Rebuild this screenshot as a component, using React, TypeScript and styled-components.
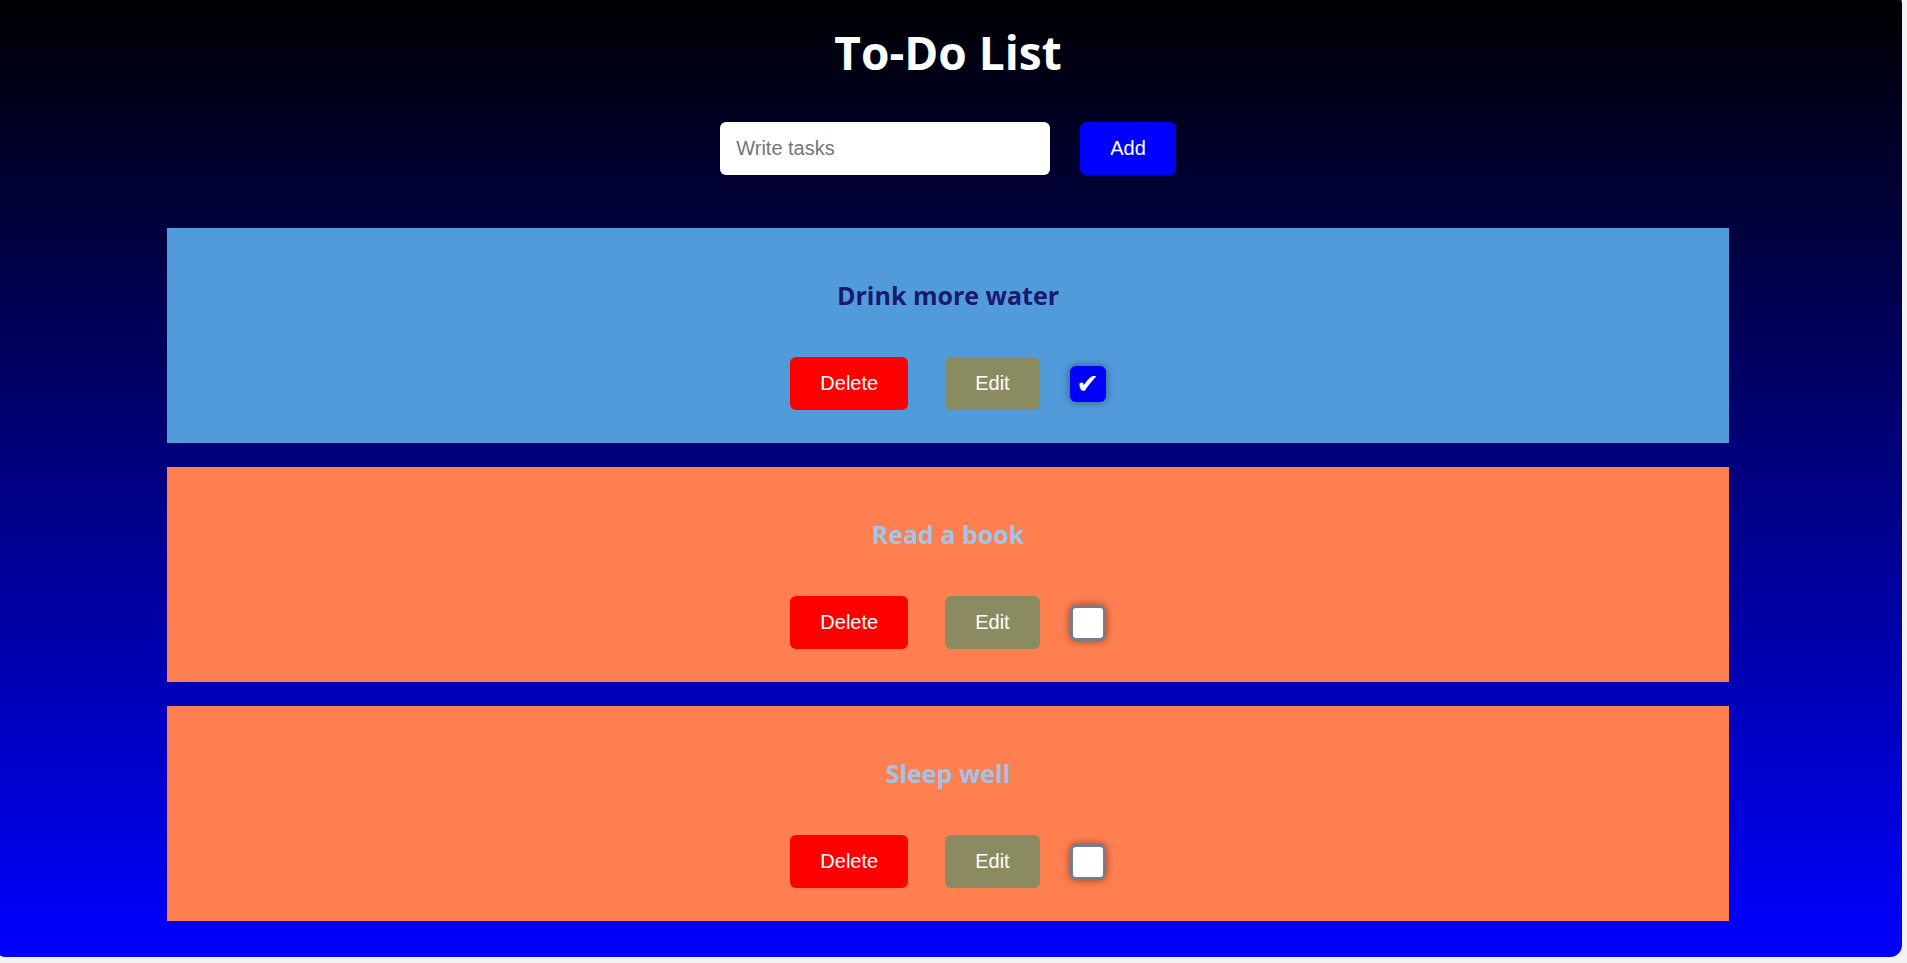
import React, { useState } from 'react';
import styled, { createGlobalStyle } from 'styled-components';

interface Task {
  id: number;
  text: string;
  done: boolean;
}

const initialTasks: Task[] = [
  { id: 1, text: 'Drink more water', done: true },
  { id: 2, text: 'Read a book', done: false },
  { id: 3, text: 'Sleep well', done: false },
];

const App = () => {
  const [tasks, setTasks] = useState<Task[]>(initialTasks);
  const [value, setValue] = useState('');

  const addTask = () => {
    if (!value.trim()) return;
    setTasks([...tasks, { id: Date.now(), text: value, done: false }]);
    setValue('');
  };
  const toggleTask = (id: number) =>
    setTasks(tasks.map((t) => (t.id === id ? { ...t, done: !t.done } : t)));
  const deleteTask = (id: number) => setTasks(tasks.filter((t) => t.id !== id));

  return (
    <>
      <GlobalStyle />
      <StWrapper>
        <StTitle>To-Do List</StTitle>
        <StForm onSubmit={(e) => { e.preventDefault(); addTask(); }}>
          <StInput placeholder="Write tasks" value={value} onChange={(e) => setValue(e.target.value)} />
          <StAddBtn type="submit">Add</StAddBtn>
        </StForm>
        <StList>
          {tasks.map((task) => (
            <StCard key={task.id} $done={task.done}>
              <StTaskText $done={task.done}>{task.text}</StTaskText>
              <StActions>
                <StDeleteBtn onClick={() => deleteTask(task.id)}>Delete</StDeleteBtn>
                <StEditBtn>Edit</StEditBtn>
                <StCheck type="checkbox" checked={task.done} onChange={() => toggleTask(task.id)} />
              </StActions>
            </StCard>
          ))}
        </StList>
      </StWrapper>
    </>
  );
};

export default App;

const GlobalStyle = createGlobalStyle`
  html, body {
    margin: 0;
    padding: 0;
    background-color: #f3f3f3;
    overflow: hidden;
  }
  * {
    box-sizing: border-box;
  }
`;

const StWrapper = styled.main`
  display: flex;
  flex-direction: column;
  align-items: center;

  margin: -8px 5px 0 -6px;
  padding: 30px 0 36px;
  border-radius: 12px;

  background: linear-gradient(to bottom, #000000, #0000ff);
`;

const StTitle = styled.h1`
  margin: 0;

  font-family: 'Segoe UI', 'Open Sans', sans-serif;
  font-weight: 700;
  font-size: 46px;
  line-height: 60px;

  color: #ffffff;
`;

const StForm = styled.form`
  display: flex;
  gap: 30px;

  margin-top: 40px;
`;

const StInput = styled.input`
  width: 330px;
  height: 53px;
  padding: 0 16px;
  border: none;
  border-radius: 6px;

  font-family: 'Liberation Sans', Arial, sans-serif;
  font-size: 20px;
  outline: none;

  &::placeholder {
    color: #757575;
  }
`;

const Button = styled.button`
  height: 53px;
  padding: 0 30px;
  border: none;
  border-radius: 6px;

  font-family: 'Liberation Sans', Arial, sans-serif;
  font-size: 20px;
  color: #ffffff;
  cursor: pointer;
`;

const StAddBtn = styled(Button)`
  background-color: #0000ff;
`;

const StList = styled.section`
  display: flex;
  flex-direction: column;
  gap: 24px;

  width: 1562px;
  margin-top: 53px;
`;

const StCard = styled.article<{ $done: boolean }>`
  display: flex;
  flex-direction: column;
  align-items: center;

  height: 215px;
  padding-top: 51px;

  background-color: ${({ $done }) => ($done ? '#529bdb' : '#ff7f50')};
`;

const StTaskText = styled.h2<{ $done: boolean }>`
  margin: 0;

  font-family: 'Segoe UI', 'Open Sans', sans-serif;
  font-weight: 700;
  font-size: 25px;
  line-height: 32px;

  color: ${({ $done }) => ($done ? '#191970' : '#9fc5e8')};
`;

const StActions = styled.div`
  display: flex;
  align-items: center;
  gap: 30px;

  margin-top: 46px;
`;

const StDeleteBtn = styled(Button)`
  margin-right: 7px;
  background-color: #ff0000;
`;

const StEditBtn = styled(Button)`
  background-color: #8b8b62;
`;

const StCheck = styled.input`
  appearance: none;
  display: grid;
  place-items: center;

  width: 36px;
  height: 36px;
  margin: 0;
  border: 3px solid #777b8c;
  border-radius: 6px;

  background-color: #ffffff;
  box-shadow: 0 0 8px rgba(0, 0, 0, 0.45);
  cursor: pointer;

  &:checked {
    border: none;
    background-color: #0000ff;
  }
  &:checked::after {
    content: '✔';
    font-family: 'DejaVu Sans', sans-serif;
    font-size: 27px;
    line-height: 1;
    color: #ffffff;
  }
`;
